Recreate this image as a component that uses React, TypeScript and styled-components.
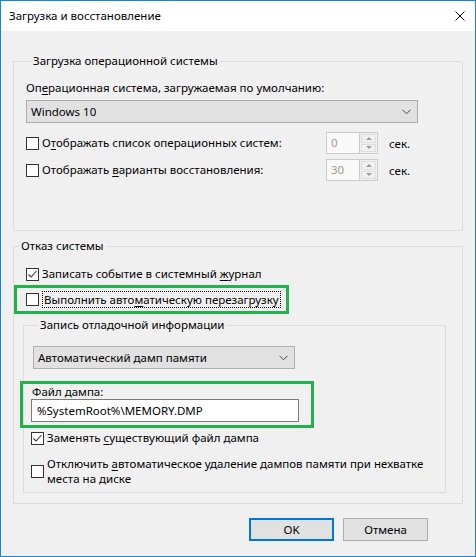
import React from "react";
import styled, { createGlobalStyle } from "styled-components";

const GlobalStyle = createGlobalStyle`
  html, body {
    margin: 0;
    padding: 0;
    background: #f0f0f0;
  }
  body {
    font-family: "Segoe UI", "Noto Sans", sans-serif;
    font-size: 11.5px;
    color: #000;
  }
  * {
    box-sizing: border-box;
  }
`;

const Window = styled.div`
  width: 476px;
  height: 557px;
  border: 1px solid #1883d7;
  background: #f0f0f0;
  display: flex;
  flex-direction: column;
`;

const TitleBar = styled.div`
  height: 30px;
  flex: none;
  background: #fff;
  display: flex;
  align-items: center;
  justify-content: space-between;
  padding-left: 8px;
`;

const Title = styled.div`
  font-size: 11.5px;
  line-height: 16px;
`;

const CloseButton = styled.div`
  width: 30px;
  height: 30px;
  display: flex;
  align-items: center;
  justify-content: center;
`;

const Body = styled.div`
  flex: 1;
  padding: 22px 12px 0 12px;
  display: flex;
  flex-direction: column;
`;

const GroupBox = styled.fieldset<{ $pad: string }>`
  margin: 0;
  min-width: 0;
  border: 1px solid #dcdcdc;
  padding: ${(p) => p.$pad};
`;

const Legend = styled.legend`
  margin-left: 5px;
  padding: 0 2px;
  line-height: 16px;
  font-size: 11.5px;
`;

const Label = styled.div<{ $indent?: number; $lh?: number }>`
  line-height: ${(p) => p.$lh || 16}px;
  padding-left: ${(p) => p.$indent || 0}px;
  white-space: nowrap;
`;

const Combo = styled.div<{ $width: number }>`
  width: ${(p) => p.$width}px;
  height: 23px;
  border: 1px solid #adadad;
  background: #e1e1e1;
  display: flex;
  align-items: center;
  justify-content: space-between;
  padding: 0 6px 0 4px;
  line-height: 16px;
`;

const SpinRow = styled.div<{ $top: number }>`
  display: grid;
  grid-template-columns: 289px 52px auto;
  column-gap: 11px;
  align-items: center;
  height: 22px;
  margin-top: ${(p) => p.$top}px;
`;

const Spinner = styled.div`
  height: 22px;
  border: 1px solid #cccccc;
  background: #f9f9f9;
  display: flex;
`;

const SpinValue = styled.div`
  flex: 1;
  padding-left: 4px;
  line-height: 20px;
  color: #a99a86;
`;

const SpinButtons = styled.div`
  width: 18px;
  border-left: 1px solid #cccccc;
  display: flex;
  flex-direction: column;
  padding: 1px;
  gap: 1px;
  background: #f0f0f0;
`;

const SpinButton = styled.div<{ $up?: boolean }>`
  flex: 1;
  border: 1px solid #dedede;
  display: flex;
  align-items: center;
  justify-content: center;
  &::after {
    content: "";
    width: 0;
    height: 0;
    border-left: 3px solid transparent;
    border-right: 3px solid transparent;
    ${(p) =>
      p.$up
        ? "border-bottom: 3px solid #9a9a9a;"
        : "border-top: 3px solid #9a9a9a;"}
  }
`;

const CheckRow = styled.label<{ $top?: number; $left?: number; $height?: number; $lh?: number }>`
  display: flex;
  align-items: center;
  gap: 3px;
  line-height: ${(p) => p.$lh || 16}px;
  white-space: nowrap;
  margin-top: ${(p) => p.$top || 0}px;
  margin-left: ${(p) => p.$left || 0}px;
  height: ${(p) => (p.$height ? `${p.$height}px` : "auto")};
`;

const Box = styled.span`
  width: 13px;
  height: 13px;
  flex: none;
  border: 1px solid #333333;
  background: #fff;
  display: flex;
  align-items: center;
  justify-content: center;
`;

const FocusText = styled.span`
  border: 1px dotted #000;
  line-height: 15px;
  padding: 0 1px;
`;

const Underline = styled.span`
  text-decoration: underline;
  text-underline-offset: 2px;
`;

const Highlight = styled.div<{ $top: number; $left: number; $width: number; $pad: string }>`
  border: 3px solid #22b14c;
  margin-top: ${(p) => p.$top}px;
  margin-left: ${(p) => p.$left}px;
  width: ${(p) => p.$width}px;
  padding: ${(p) => p.$pad};
`;

const InnerGroup = styled(GroupBox)`
  margin-top: 3px;
  margin-left: 9px;
`;

const TextInput = styled.div`
  margin-left: 8px;
  width: 268px;
  height: 23px;
  border: 1px solid #7a7a7a;
  background: #fff;
  padding-left: 5px;
  line-height: 21px;
`;

const ButtonRow = styled.div`
  display: flex;
  justify-content: flex-end;
  gap: 9px;
  margin-top: 14px;
  padding-right: 35px;
`;

const Button = styled.div<{ $default?: boolean }>`
  width: 85px;
  height: 23px;
  background: #e1e1e1;
  border: ${(p) => (p.$default ? "2px solid #0078d7" : "1px solid #adadad")};
  display: flex;
  align-items: center;
  justify-content: center;
  line-height: 16px;
`;

const Check = ({ checked }: { checked?: boolean }) => (
  <Box>
    {checked && (
      <svg width="11" height="11" viewBox="0 0 11 11">
        <polyline points="1.5,5.5 4,8 9.5,2" fill="none" stroke="#333" strokeWidth="1.1" />
      </svg>
    )}
  </Box>
);

const Chevron = () => (
  <svg width="9" height="6" viewBox="0 0 9 6">
    <polyline points="0.5,0.8 4.5,4.8 8.5,0.8" fill="none" stroke="#444" strokeWidth="1" />
  </svg>
);

const Spin = ({ value }: { value: string }) => (
  <Spinner>
    <SpinValue>{value}</SpinValue>
    <SpinButtons>
      <SpinButton $up />
      <SpinButton />
    </SpinButtons>
  </Spinner>
);

export default function App() {
  return (
    <>
      <GlobalStyle />
      <Window>
        <TitleBar>
          <Title>Загрузка и восстановление</Title>
          <CloseButton>
            <svg width="10" height="10" viewBox="0 0 10 10">
              <path d="M0.5 0.5 L9.5 9.5 M9.5 0.5 L0.5 9.5" stroke="#000" strokeWidth="1" />
            </svg>
          </CloseButton>
        </TitleBar>
        <Body>
          <GroupBox $pad="11px 12px 49px 12px">
            <Legend>Загрузка операционной системы</Legend>
            <Label>
              Оп<Underline>е</Underline>рационная система, загружаемая по умолчанию:
            </Label>
            <div style={{ height: 4 }} />
            <Combo $width={392}>
              <span>Windows 10</span>
              <Chevron />
            </Combo>
            <SpinRow $top={9}>
              <CheckRow>
                <Check />
                <span>
                  О<Underline>т</Underline>ображать список операционных систем:
                </span>
              </CheckRow>
              <Spin value="0" />
              <span>сек.</span>
            </SpinRow>
            <SpinRow $top={5}>
              <CheckRow>
                <Check />
                <span>
                  Отображать <Underline>в</Underline>арианты восстановления:
                </span>
              </CheckRow>
              <Spin value="30" />
              <span>сек.</span>
            </SpinRow>
          </GroupBox>

          <GroupBox $pad="12px 16px 10px 0" style={{ marginTop: 7 }}>
            <Legend>Отказ системы</Legend>
            <CheckRow $left={12}>
              <Check checked />
              <span>
                Записать событие в системный <Underline>ж</Underline>урнал
              </span>
            </CheckRow>
            <Highlight $top={3} $left={0} $width={275} $pad="0 0 0 9px">
              <CheckRow $height={23}>
                <Check />
                <FocusText>
                  Выполнить авто<Underline>м</Underline>атическую перезагрузку
                </FocusText>
              </CheckRow>
            </Highlight>
            <InnerGroup $pad="13px 0 6px 9px">
              <Legend>Запись отладочной информации</Legend>
              <Combo $width={262}>
                <span>Автоматический дамп памяти</span>
                <Chevron />
              </Combo>
              <Highlight $top={12} $left={-13} $width={294} $pad="0 0 3px 0">
                <Label $indent={9} $lh={15}>
                  Файл дампа:
                </Label>
                <TextInput>%SystemRoot%\MEMORY.DMP</TextInput>
              </Highlight>
              <CheckRow $top={2} $left={-2}>
                <Check checked />
                <span>
                  Заменять <Underline>с</Underline>уществующий файл дампа
                </span>
              </CheckRow>
              <CheckRow $top={10} $left={-2} $lh={15}>
                <Check />
                <span>
                  Отключить <Underline>а</Underline>втоматическое удаление дампов памяти при нехватке
                  <br />
                  места на диске
                </span>
              </CheckRow>
            </InnerGroup>
          </GroupBox>

          <ButtonRow>
            <Button $default>OK</Button>
            <Button>Отмена</Button>
          </ButtonRow>
        </Body>
      </Window>
    </>
  );
}
